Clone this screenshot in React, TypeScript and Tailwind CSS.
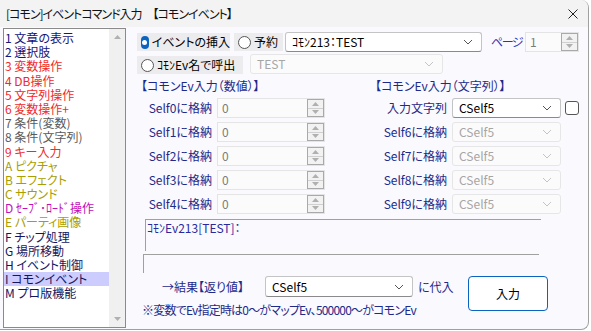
import React from 'react';

const items = [
  { t: '1 文章の表示', c: 'text-[#16167a]' },
  { t: '2 選択肢', c: 'text-[#16167a]' },
  { t: '3 変数操作', c: 'text-[#f02a2a]' },
  { t: '4 DB操作', c: 'text-[#f02a2a]' },
  { t: '5 文字列操作', c: 'text-[#f02a2a]' },
  { t: '6 変数操作+', c: 'text-[#f02a2a]' },
  { t: '7 条件(変数)', c: 'text-[#5a5a5a]' },
  { t: '8 条件(文字列)', c: 'text-[#5a5a5a]' },
  { t: '9 キー入力', c: 'text-[#f02a2a]' },
  { t: 'A ピクチャ', c: 'text-[#a89e00]' },
  { t: 'B エフェクト', c: 'text-[#a89e00]' },
  { t: 'C サウンド', c: 'text-[#a89e00]' },
  { t: 'D ｾｰﾌﾞ･ﾛｰﾄﾞ操作', c: 'text-[#c010b8]' },
  { t: 'E パーティ画像', c: 'text-[#a89e00]' },
  { t: 'F チップ処理', c: 'text-[#16165e]' },
  { t: 'G 場所移動', c: 'text-[#16165e]' },
  { t: 'H イベント制御', c: 'text-[#16165e]' },
  { t: 'I コモンイベント', c: 'text-[#16165e]', sel: true },
  { t: 'M プロ版機能', c: 'text-[#16165e]' },
];

const Chevron = ({ light }: { light?: boolean }) => (
  <svg width="10" height="6" viewBox="0 0 10 6" className="mr-[8px]">
    <path d="M1 1l4 4 4-4" fill="none" stroke={light ? '#c4c4c4' : '#555'} strokeWidth="1" />
  </svg>
);

const Tri = ({ up }: { up?: boolean }) => (
  <svg width="7" height="4" viewBox="0 0 7 4">
    <path d={up ? 'M0 4L3.5 0 7 4z' : 'M0 0L3.5 4 7 0z'} fill="#b0b0b0" />
  </svg>
);

const Spin = ({ value, w }: { value: string; w: string }) => (
  <div className={`flex h-[20px] border border-[#e4e4e4] bg-[#fbfbfb] ${w}`}>
    <span className="flex-1 pl-[4px] leading-[18px] text-[#7c7c7c]">{value}</span>
    <div className="flex w-[17px] flex-col border border-[#a9a9a9] bg-[#f2f2f2]">
      <div className="flex flex-1 items-center justify-center border-b border-[#d0d0d0]"><Tri up /></div>
      <div className="flex flex-1 items-center justify-center"><Tri /></div>
    </div>
  </div>
);

const Select = ({ value, light, w }: { value: string; light?: boolean; w: string }) => (
  <div
    className={`flex h-[20px] items-center rounded-[3px] border ${
      light ? 'border-[#e6e6e6] bg-[#fbfbfb] text-[#a6a6a6]' : 'border-[#c4c4c4] border-b-[#8a8a8a] bg-white text-black'
    } ${w}`}
  >
    <span className="flex-1 pl-[6px] leading-[18px]">{value}</span>
    <Chevron light={light} />
  </div>
);

const Radio = ({ checked, label, w }: { checked?: boolean; label: string; w: string }) => (
  <div className={`flex h-[18px] items-center gap-[3px] bg-[#ececee] pl-[4px] ${w}`}>
    {checked ? (
      <span className="flex h-[13px] w-[13px] items-center justify-center rounded-full bg-[#0a64c0]">
        <span className="h-[5px] w-[5px] rounded-full bg-white" />
      </span>
    ) : (
      <span className="h-[13px] w-[13px] rounded-full border border-[#555] bg-white" />
    )}
    <span className="text-black">{label}</span>
  </div>
);

export default function App() {
  return (
    <div className="h-[331px] w-[591px] overflow-hidden whitespace-nowrap bg-white font-['Noto_Sans_CJK_JP',sans-serif] text-[12px] [font-feature-settings:'palt']">
      <div className="flex h-[330px] w-[589px] flex-col overflow-hidden rounded-r-[8px] border-r border-b border-[#a0a0a0] bg-[#f9f9fe]">
        {/* title */}
        <div className="flex h-[27px] shrink-0 items-center justify-between bg-[#f3f3f3] pl-[6px] pr-[10px] text-[#111]">
          <span className="tracking-[-1px]">[コモン]イベントコマンド入力　【コモンイベント】</span>
          <svg width="10" height="10" viewBox="0 0 10 10">
            <path d="M0.5 0.5l9 9M9.5 0.5l-9 9" stroke="#222" strokeWidth="1" />
          </svg>
        </div>

        <div className="flex flex-1">
          {/* command list */}
          <div className="ml-[3px] mt-[1px] flex h-[300px] w-[123px] border border-[#8a8a8a] bg-white">
            <div className="flex-1 pt-[2px]">
              {items.map((it) => (
                <div key={it.t} className={`h-[14.2px] pl-[1px] leading-[14.2px] ${it.c} ${it.sel ? 'bg-[#ccccff]' : ''}`}>
                  {it.t}
                </div>
              ))}
            </div>
            <div className="flex w-[16px] flex-col items-center justify-between bg-[#f0f0f0] py-[6px]">
              <Tri up />
              <Tri />
            </div>
          </div>

          {/* right panel */}
          <div className="ml-[10px] flex flex-1 flex-col pt-[5px] text-[#1e2a8a]">
            <div className="flex h-[20px] items-center">
              <Radio checked label="イベントの挿入" w="w-[93px] ml-[1px]" />
              <Radio label="予約" w="w-[49px] ml-[4px]" />
              <Select value="ｺﾓﾝ213：TEST" w="w-[197px] ml-[2px]" />
              <span className="ml-[9px] w-[34px] tracking-[-1.5px] text-[#2a36b0]">ページ</span>
              <Spin value="1" w="w-[54px]" />
            </div>
            <div className="mt-[2px] flex h-[20px] items-center">
              <Radio label="ｺﾓﾝEv名で呼出" w="w-[106px] ml-[1px] mt-[2px]" />
              <Select value="TEST" light w="w-[193px] ml-[7px]" />
            </div>

            <div className="mt-[4px] flex">
              {/* numeric */}
              <div className="flex w-[194px] flex-col">
                <div className="ml-[5px] h-[16px] leading-[16px]">【コモンEv入力（数値）】</div>
                <div className="mt-[4px] flex flex-col gap-[4px]">
                  {[0, 1, 2, 3, 4].map((n) => (
                    <div key={n} className="flex items-center">
                      <span className="w-[81px] pr-[5px] text-right">Self{n}に格納</span>
                      <Spin value="0" w="w-[108px]" />
                    </div>
                  ))}
                </div>
              </div>
              {/* string */}
              <div className="ml-[10px] flex flex-col">
                <div className="ml-[35px] h-[16px] leading-[16px]">【コモンEv入力（文字列）】</div>
                <div className="mt-[4px] flex flex-col gap-[4px]">
                  <div className="flex items-center">
                    <span className="w-[112px] pr-[5px] text-right">入力文字列</span>
                    <Select value="CSelf5" w="w-[109px]" />
                    <span className="ml-[4px] h-[14px] w-[14px] rounded-[3px] border border-[#555] bg-white" />
                  </div>
                  {[6, 7, 8, 9].map((n) => (
                    <div key={n} className="flex items-center">
                      <span className="w-[112px] pr-[5px] text-right">Self{n}に格納</span>
                      <Select value="CSelf5" light w="w-[109px]" />
                    </div>
                  ))}
                </div>
              </div>
            </div>

            <div className="ml-[9px] mt-[5px] h-[32px] w-[396px] border-t border-l border-[#a0a0a0] bg-[#f9f9fe] pl-[1px] leading-[16px] text-[#2a2aa0]">
              ｺﾓﾝEv213[TEST]：
            </div>
            <div className="ml-[7px] mt-[3px] h-[19px] w-[396px] border-t border-l border-[#a0a0a0] bg-[#f9f9fe]" />

            <div className="mt-[3px] flex">
              <div className="flex w-[332px] flex-col">
                <div className="flex h-[21px] items-center">
                  <span className="ml-[26px] w-[103px]">→結果【返り値】</span>
                  <Select value="CSelf5" w="w-[148px] !h-[21px]" />
                  <span className="ml-[5px]">に代入</span>
                </div>
                <div className="ml-[6px] mt-[5px] leading-[16px] tracking-[-0.8px]">
                  ※変数でEv指定時は0～がマップEv、500000～がコモンEv
                </div>
              </div>
              <button className="h-[35px] w-[80px] rounded-[4px] border border-[#0a64c0] bg-white text-black">
                入力
              </button>
            </div>
          </div>
        </div>
      </div>
    </div>
  );
}
